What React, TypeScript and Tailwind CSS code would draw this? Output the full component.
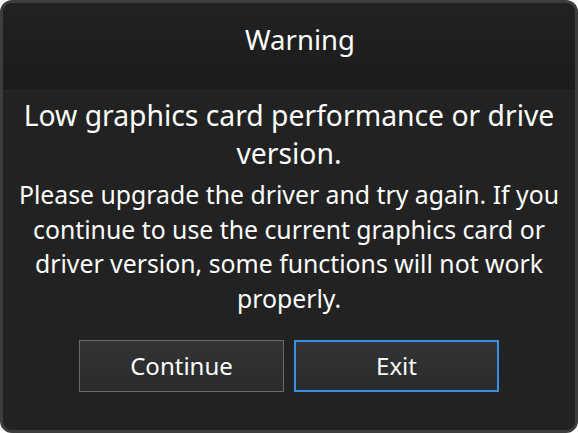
export default function App() {
  return (
    <div className="w-[578px] h-[433px] bg-white" style={{ fontFamily: '"Noto Sans", "Open Sans", sans-serif' }}>
      <div className="w-full h-full rounded-[12px] border-[3px] border-[#3d3d3d] bg-[#202020] overflow-hidden flex flex-col">
        <div className="h-[88px] shrink-0 flex items-center justify-center bg-gradient-to-b from-[#222222] to-[#1b1b1b] border-b border-[#2a2a2a]">
          <span className="ml-[22px] text-[27.5px] text-white leading-none -mt-[13px]">Warning</span>
        </div>
        <div className="flex-1 bg-[#222222] flex flex-col items-center text-white text-center px-[10px]">
          <p className="mt-[5px] text-[28.3px] leading-[38px]">Low graphics card performance or drive version.</p>
          <p className="mt-[5px] text-[24.8px] leading-[34.7px]">
            Please upgrade the driver and try again. If you continue to use the current graphics card or driver version, some functions will not work properly.
          </p>
          <div className="mt-[24px] flex gap-[10px]">
            <button className="w-[205px] h-[52px] border border-[#6a6a6a] bg-gradient-to-b from-[#323335] to-[#2a2b2d] text-[24px] text-white">
              Continue
            </button>
            <button className="w-[205px] h-[52px] border-2 border-[#3a8ee6] bg-gradient-to-b from-[#323335] to-[#2a2b2d] text-[24px] text-white">
              Exit
            </button>
          </div>
        </div>
      </div>
    </div>
  );
}
